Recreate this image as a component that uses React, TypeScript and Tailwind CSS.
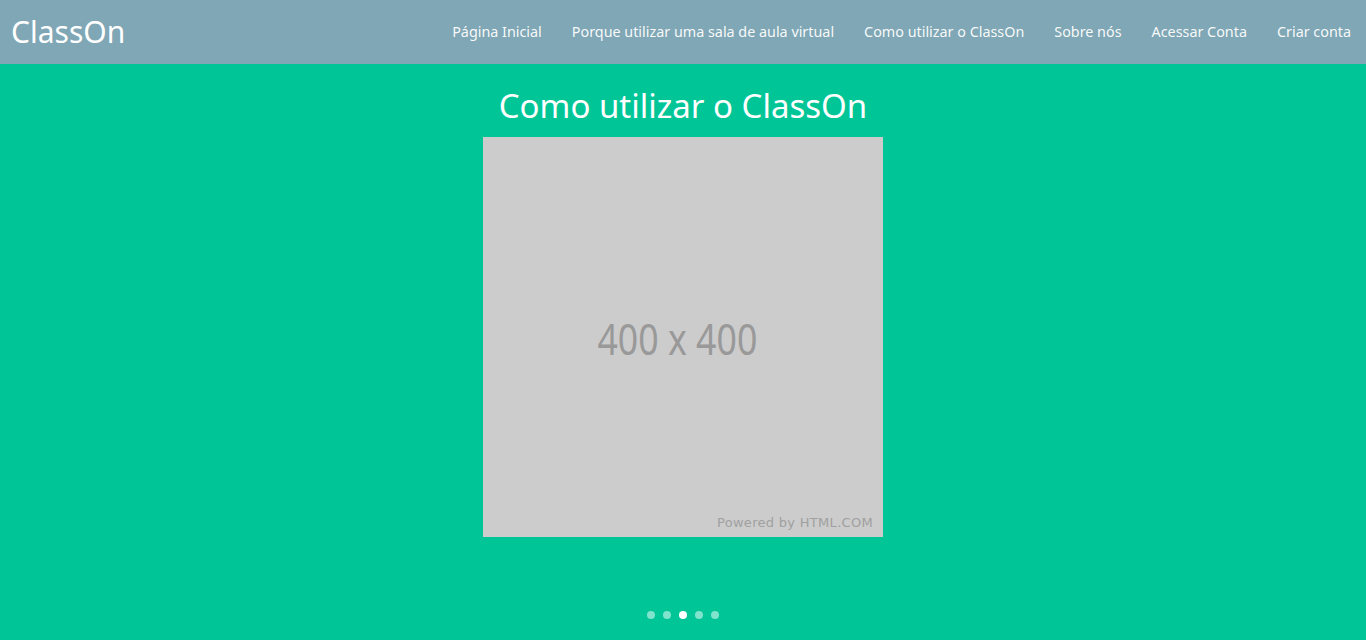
const links = [
  "Página Inicial",
  "Porque utilizar uma sala de aula virtual",
  "Como utilizar o ClassOn",
  "Sobre nós",
  "Acessar Conta",
  "Criar conta",
]

function Header() {
  return (
    <header className="h-16 bg-[#80a7b5] flex items-center justify-between pl-[11px] pr-[15px]">
      <span className="text-[30px] text-white leading-none">ClassOn</span>
      <nav className="flex items-center gap-[30px]">
        {links.map((l) => (
          <span key={l} className="text-[14.35px] text-white/95">
            {l}
          </span>
        ))}
      </nav>
    </header>
  )
}

function Placeholder() {
  return (
    <div className="w-[400px] h-[400px] bg-[#cccccc] flex flex-col items-center">
      <div className="flex-1 flex items-center justify-center pt-[28px]">
        <span className="text-[43px] text-[#999999] scale-x-[0.83] inline-block mr-[12px]">400 x 400</span>
      </div>
      <div
        className="self-end pr-[10px] pb-[5px] text-[13px] text-[#a0a0a0] tracking-[0.3px]"
        style={{ fontFamily: '"DejaVu Sans", sans-serif' }}
      >
        Powered by HTML.COM
      </div>
    </div>
  )
}

export default function App() {
  return (
    <div className="h-[640px] bg-[#00c697] flex flex-col" style={{ fontFamily: '"Noto Sans", "Open Sans", sans-serif' }}>
      <Header />
      <main className="flex-1 flex flex-col items-center">
        <h1 className="text-[33px] text-white mt-[20px] leading-[44px] mb-[9px]">Como utilizar o ClassOn</h1>
        <Placeholder />
        <div className="flex gap-[8px] mt-[74px]">
          <span className="w-[8px] h-[8px] rounded-full bg-white/50" />
          <span className="w-[8px] h-[8px] rounded-full bg-white/50" />
          <span className="w-[8px] h-[8px] rounded-full bg-white" />
          <span className="w-[8px] h-[8px] rounded-full bg-white/50" />
          <span className="w-[8px] h-[8px] rounded-full bg-white/50" />
        </div>
      </main>
    </div>
  )
}
